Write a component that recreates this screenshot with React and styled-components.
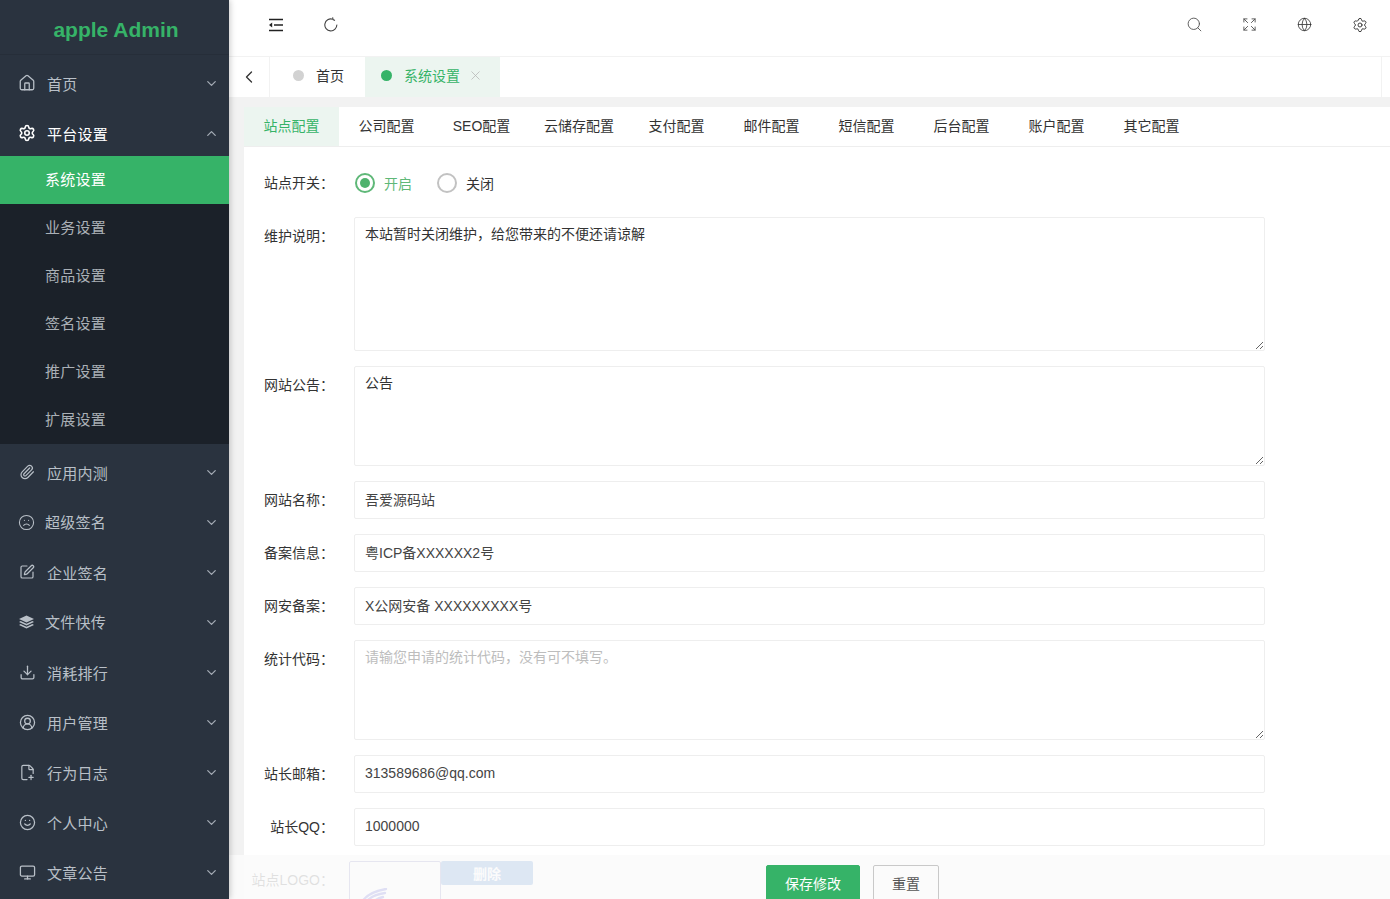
import React from 'react';
import styled, { createGlobalStyle } from 'styled-components';
import {
  Home, Settings, Paperclip, Frown, SquarePen, Download, CircleUserRound, FilePlus2, Smile, Monitor,
  ChevronDown, ChevronUp, ChevronLeft, X, Search, Expand, Globe,
} from 'lucide-react';

const FONT = '"Liberation Sans", "Noto Sans CJK SC", sans-serif';
const GREEN = '#36b368';

const GlobalStyle = createGlobalStyle`
  html, body { margin: 0; padding: 0; height: 100%; overflow: hidden; }
  body { font-family: ${FONT}; font-size: 14px; color: #333; background: #f2f2f2; }
  * { box-sizing: border-box; }
`;

const Layout = styled.div`
  display: flex;
  height: 100vh;
  overflow: hidden;
`;

const Sidebar = styled.aside`
  flex: 0 0 229px;
  background: #2a333f;
  box-shadow: 1px 0 6px rgba(0, 0, 0, 0.22);
  position: relative;
  z-index: 3;
  overflow: hidden;
`;

const Logo = styled.div`
  height: 55px;
  border-bottom: 1px solid #262e39;
  display: flex;
  align-items: center;
  justify-content: center;
  padding: 6px 0 0 3px;
  color: ${GREEN};
  font-size: 21px;
  font-weight: 700;
`;

const Menu = styled.nav`
  padding-top: 4px;
`;

const MenuRow = styled.div`
  height: ${p => (p.$open ? '47px' : '50px')};
  display: flex;
  align-items: center;
  padding: ${p => (p.$open ? '3px' : '0')} 12px 0 ${p => (p.$wide ? '19px' : '20px')};
  color: ${p => (p.$open ? '#fff' : '#b9c0c8')};
  font-size: 15px;
  letter-spacing: 0.25px;
  svg { flex: none; }
`;

const MenuIcon = styled.span`
  width: 14px;
  height: 14px;
  display: flex;
  align-items: center;
  justify-content: center;
  margin-top: -2px;
`;

const MenuLabel = styled.span`
  flex: 1;
  margin-left: ${p => (p.$wide ? '12px' : '13px')};
  margin-top: ${p => (p.$wide ? '-3px' : '-1px')};
`;

const Caret = styled.span`
  display: flex;
  width: 11px;
  height: 11px;
  margin-top: -2px;
  color: #a4acb5;
  align-items: center;
  justify-content: center;
`;

const SubMenu = styled.div`
  background: #1b2129;
  margin-bottom: 4px;
`;

const SubItem = styled.div`
  height: 48px;
  padding: 0 0 3px 45px;
  display: flex;
  align-items: center;
  font-size: 15px;
  letter-spacing: 0.25px;
  color: ${p => (p.$active ? '#fff' : '#aab0b6')};
  background: ${p => (p.$active ? GREEN : 'transparent')};
`;

const Main = styled.main`
  flex: 1;
  min-width: 0;
  position: relative;
  display: flex;
  flex-direction: column;
  background: #f2f2f2;
  overflow: hidden;
`;

const TopBar = styled.header`
  flex: 0 0 57px;
  background: #fff;
  border-bottom: 1px solid #f2f2f2;
  padding: 0 3px 7px 19px;
  display: flex;
  align-items: center;
  justify-content: space-between;
`;

const IconGroup = styled.div`
  display: flex;
`;

const TopIcon = styled.span`
  width: 55px;
  display: flex;
  align-items: center;
  justify-content: center;
  color: ${p => p.$color || '#333'};
`;

const TabStrip = styled.div`
  flex: 0 0 40px;
  background: #fff;
  display: flex;
`;

const StripArrow = styled.span`
  width: 41px;
  border-right: 1px solid #f2f2f2;
  display: flex;
  align-items: center;
  justify-content: center;
  color: #333;
`;

const PageTab = styled.div`
  display: flex;
  align-items: center;
  height: 40px;
  padding: 0 0 4px ${p => (p.$active ? '16px' : '23px')};
  width: ${p => (p.$active ? '135px' : '95px')};
  background: ${p => (p.$active ? '#ecf5f0' : '#fff')};
  color: ${p => (p.$active ? GREEN : '#333')};
`;

const Dot = styled.i`
  width: 11px;
  height: 11px;
  border-radius: 50%;
  margin-right: 12px;
  background: ${p => (p.$active ? GREEN : '#d2d2d2')};
`;

const TabClose = styled.span`
  display: flex;
  margin-left: 8px;
  margin-top: 1px;
  color: #b4b4b4;
`;

const StripEnd = styled.div`
  margin-left: auto;
  width: 9px;
  border-left: 1px solid #f2f2f2;
`;

const Content = styled.div`
  flex: 1;
  min-height: 0;
  padding: 10px 0 0 15px;
  overflow: hidden;
`;

const Card = styled.section`
  background: #fff;
  height: 100%;
`;

const ConfigTabs = styled.ul`
  list-style: none;
  margin: 0;
  padding: 0;
  height: 40px;
  display: flex;
  border-bottom: 1px solid #eee;
`;

const ConfigTab = styled.li`
  box-sizing: content-box;
  min-width: 65px;
  padding: 0 15px;
  height: 39px;
  line-height: 38px;
  text-align: center;
  font-size: 14px;
  color: ${p => (p.$active ? GREEN : '#333')};
  background: ${p => (p.$active ? '#ecf5f0' : 'transparent')};
`;

const Form = styled.form`
  padding-top: 17px;
  display: flex;
  flex-direction: column;
  gap: 15px;
`;

const Row = styled.div`
  display: flex;
  align-items: flex-start;
`;

const Label = styled.label`
  flex: 0 0 110px;
  padding-right: 20px;
  text-align: right;
  line-height: 38px;
  color: #333;
  white-space: nowrap;
`;

const RadioGroup = styled.div`
  display: flex;
  align-items: center;
  height: 38px;
  padding-left: 1px;
`;

const RadioCircle = styled.i`
  width: 20px;
  height: 20px;
  border-radius: 50%;
  border: 2px solid ${p => (p.$on ? '#5fb878' : '#c2c2c2')};
  display: flex;
  align-items: center;
  justify-content: center;
  margin-right: 9px;
  &::after {
    content: '';
    width: 10px;
    height: 10px;
    border-radius: 50%;
    background: ${p => (p.$on ? '#4fb26d' : 'transparent')};
  }
`;

const RadioText = styled.span`
  margin-right: 25px;
  color: ${p => (p.$on ? '#5fb878' : '#333')};
`;

const TextInput = styled.input`
  width: 911px;
  height: 38px;
  border: 1px solid #eee;
  border-radius: 2px;
  padding: 0 10px 2px;
  font: 14px ${FONT};
  color: #444;
  outline: none;
  background: #fff;
`;

const TextArea = styled.textarea`
  display: block;
  width: 911px;
  height: ${p => p.$h}px;
  border: 1px solid #eee;
  border-radius: 2px;
  padding: 6px 10px;
  font: 14px/20px ${FONT};
  color: #333;
  outline: none;
  background: #fff;
  resize: vertical;
  &::placeholder { color: #bdbdbd; }
`;

const LogoField = styled.div`
  display: flex;
  margin-left: -5px;
`;

const LogoBox = styled.div`
  width: 92px;
  height: 92px;
  border: 1px solid #6060a8;
  border-radius: 2px;
  padding: 26px 0 0 10px;
`;

const DeleteBtn = styled.button`
  width: 92px;
  height: 24px;
  border: none;
  border-radius: 2px;
  background: #1e62c0;
  color: #fff;
  font: 700 14px ${FONT};
  padding: 0;
`;

const SaveBar = styled.div`
  position: absolute;
  left: 0;
  right: 0;
  bottom: 0;
  height: 44px;
  padding: 10px 0 0 537px;
  background: rgba(250, 250, 250, 0.87);
  display: flex;
  align-items: flex-start;
  gap: 13px;
  z-index: 2;
`;

const Button = styled.button`
  flex: none;
  height: 38px;
  padding: 0 0 2px;
  width: ${p => (p.$primary ? '94px' : '66px')};
  border-radius: 2px;
  border: 1px solid ${p => (p.$primary ? GREEN : '#c9c9c9')};
  background: ${p => (p.$primary ? GREEN : 'transparent')};
  color: ${p => (p.$primary ? '#fff' : '#555')};
  font: 14px ${FONT};
`;

const LayersIcon = () => (
  <svg width="15" height="14" viewBox="0 0 15 14" fill="currentColor">
    <path d="M7.5 0.5 L15 4 L7.5 7.5 L0 4 Z" />
    <path d="M1.6 6 L7.5 8.8 L13.4 6 L15 6.9 L7.5 10.4 L0 6.9 Z" />
    <path d="M1.6 9 L7.5 11.8 L13.4 9 L15 9.9 L7.5 13.4 L0 9.9 Z" />
  </svg>
);

const ShrinkIcon = () => (
  <svg width="16" height="14" viewBox="0 0 16 14" fill="none" stroke="#222" strokeWidth="1.6">
    <path d="M1 1.5 H15 M6 7 H15 M1 12.5 H15" />
    <path d="M4.2 4.6 L1 7 L4.2 9.4 Z" fill="#222" stroke="none" />
  </svg>
);

const RefreshIcon = () => (
  <svg width="14" height="15" viewBox="0 0 14 15" fill="none" stroke="#444" strokeWidth="1.1">
    <path d="M8.6 2.2 A6 6 0 1 0 12.8 7.6" />
    <path d="M8.6 0.4 L9 2.6 L11 3.4" />
  </svg>
);

const LogoArt = () => (
  <svg width="28" height="16" viewBox="0 0 28 16" fill="none" stroke="#2a2ac8" strokeWidth="2.4" strokeLinecap="round">
    <path d="M2 14 C6 7 14 3 26 1" />
    <path d="M5 15 C9 10 16 6 25 5" />
    <path d="M12 15 C15 12 19 10 23 9" />
  </svg>
);

const menuTop = [
  { label: '首页', icon: <Home size={18} strokeWidth={1.7} /> },
  { label: '平台设置', icon: <Settings size={18} strokeWidth={2.1} />, open: true },
];

const subItems = ['系统设置', '业务设置', '商品设置', '签名设置', '推广设置', '扩展设置'];

const menuRest = [
  { label: '应用内测', icon: <Paperclip size={16} strokeWidth={1.8} /> },
  { label: '超级签名', icon: <Frown size={17} strokeWidth={1.5} />, wide: true },
  { label: '企业签名', icon: <SquarePen size={16} strokeWidth={1.8} /> },
  { label: '文件快传', icon: <LayersIcon />, wide: true },
  { label: '消耗排行', icon: <Download size={17} strokeWidth={1.8} /> },
  { label: '用户管理', icon: <CircleUserRound size={17} strokeWidth={1.8} /> },
  { label: '行为日志', icon: <FilePlus2 size={17} strokeWidth={1.7} /> },
  { label: '个人中心', icon: <Smile size={17} strokeWidth={1.8} /> },
  { label: '文章公告', icon: <Monitor size={17} strokeWidth={1.8} /> },
];

const configTabs = ['站点配置', '公司配置', 'SEO配置', '云储存配置', '支付配置', '邮件配置', '短信配置', '后台配置', '账户配置', '其它配置'];

const SideRow = ({ item }) => (
  <MenuRow $open={item.open} $wide={item.wide}>
    <MenuIcon>{item.icon}</MenuIcon>
    <MenuLabel $wide={item.wide}>{item.label}</MenuLabel>
    <Caret>{item.open ? <ChevronUp size={15} /> : <ChevronDown size={15} />}</Caret>
  </MenuRow>
);

const App = () => {
  return (
    <Layout>
      <GlobalStyle />
      <Sidebar>
        <Logo>apple Admin</Logo>
        <Menu>
          {menuTop.map(item => <SideRow key={item.label} item={item} />)}
          <SubMenu>
            {subItems.map((label, i) => <SubItem key={label} $active={i === 0}>{label}</SubItem>)}
          </SubMenu>
          {menuRest.map(item => <SideRow key={item.label} item={item} />)}
        </Menu>
      </Sidebar>

      <Main>
        <TopBar>
          <IconGroup>
            <TopIcon><ShrinkIcon /></TopIcon>
            <TopIcon><RefreshIcon /></TopIcon>
          </IconGroup>
          <IconGroup>
            <TopIcon $color="#555"><Search size={17} strokeWidth={1.3} /></TopIcon>
            <TopIcon $color="#555"><Expand size={15} strokeWidth={1.5} /></TopIcon>
            <TopIcon><Globe size={15} strokeWidth={1.3} /></TopIcon>
            <TopIcon><Settings size={16} strokeWidth={1.4} /></TopIcon>
          </IconGroup>
        </TopBar>

        <TabStrip>
          <StripArrow><ChevronLeft size={20} strokeWidth={1.6} /></StripArrow>
          <PageTab><Dot />首页</PageTab>
          <PageTab $active><Dot $active />系统设置<TabClose><X size={15} strokeWidth={1.2} /></TabClose></PageTab>
          <StripEnd />
        </TabStrip>

        <Content>
          <Card>
            <ConfigTabs>
              {configTabs.map((t, i) => <ConfigTab key={t} $active={i === 0}>{t}</ConfigTab>)}
            </ConfigTabs>
            <Form>
              <Row>
                <Label>站点开关：</Label>
                <RadioGroup>
                  <RadioCircle $on />
                  <RadioText $on>开启</RadioText>
                  <RadioCircle />
                  <RadioText>关闭</RadioText>
                </RadioGroup>
              </Row>
              <Row>
                <Label>维护说明：</Label>
                <TextArea $h={134} defaultValue="本站暂时关闭维护，给您带来的不便还请谅解" />
              </Row>
              <Row>
                <Label>网站公告：</Label>
                <TextArea $h={100} defaultValue="公告" />
              </Row>
              <Row>
                <Label>网站名称：</Label>
                <TextInput defaultValue="吾爱源码站" />
              </Row>
              <Row>
                <Label>备案信息：</Label>
                <TextInput defaultValue="粤ICP备XXXXXX2号" />
              </Row>
              <Row>
                <Label>网安备案：</Label>
                <TextInput defaultValue="X公网安备 XXXXXXXXX号" />
              </Row>
              <Row>
                <Label>统计代码：</Label>
                <TextArea $h={100} placeholder="请输您申请的统计代码，没有可不填写。" />
              </Row>
              <Row>
                <Label>站长邮箱：</Label>
                <TextInput defaultValue="313589686@qq.com" />
              </Row>
              <Row>
                <Label>站长QQ：</Label>
                <TextInput defaultValue="1000000" />
              </Row>
              <Row>
                <Label>站点LOGO：</Label>
                <LogoField>
                  <LogoBox><LogoArt /></LogoBox>
                  <DeleteBtn type="button">删除</DeleteBtn>
                </LogoField>
              </Row>
            </Form>
          </Card>
        </Content>

        <SaveBar>
          <Button type="button" $primary>保存修改</Button>
          <Button type="button">重置</Button>
        </SaveBar>
      </Main>
    </Layout>
  );
};

export default App;
